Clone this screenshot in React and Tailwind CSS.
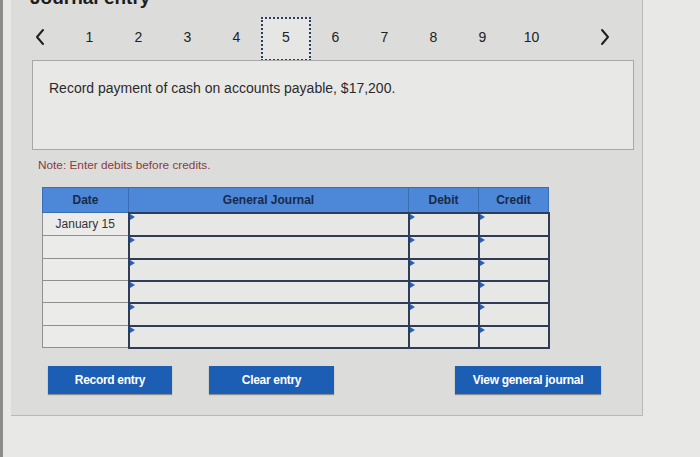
import React from 'react';

const pages = [1, 2, 3, 4, 5, 6, 7, 8, 9, 10];
const rows = [
  { date: 'January 15', h: 'h-[23px]' },
  { date: '', h: 'h-[23px]' },
  { date: '', h: 'h-[22px]' },
  { date: '', h: 'h-[22px]' },
  { date: '', h: 'h-[23px]' },
  { date: '', h: 'h-[22px]' },
];

const Chevron = ({ dir }) => (
  <svg width="10" height="18" viewBox="0 0 10 18" fill="none">
    <path
      d={dir === 'left' ? 'M8 2 L2 9 L8 16' : 'M2 2 L8 9 L2 16'}
      stroke="#1f1f1f"
      strokeWidth="2"
      strokeLinecap="round"
      strokeLinejoin="round"
    />
  </svg>
);

const InputCell = ({ width }) => (
  <td className={`${width} relative border-2 border-[#2f3c58] bg-[#e7e7e6] p-0`}>
    <span className="absolute left-0 top-0 w-0 h-0 border-t-[3px] border-b-[3px] border-l-[5px] border-t-transparent border-b-transparent border-l-[#2b5fb3]" />
  </td>
);

const Button = ({ children, className }) => (
  <button
    className={`h-[28px] bg-[#1d5eb5] text-white text-[12px] font-bold tracking-[-0.3px] shadow-[0_1px_1px_rgba(0,0,0,0.35)] ${className}`}
  >
    {children}
  </button>
);

export default function App() {
  return (
    <div className="w-[700px] h-[457px] overflow-hidden bg-[#e8e8e6] border-l-[3px] border-[#8c8c8c] font-['Liberation_Sans',Arial,sans-serif]">
      <div className="ml-[8px] w-[632px] h-[416px] bg-[#dcdcdb] border-r border-b border-[#b9b9b9] flex flex-col">
        {/* title, scrolled mostly out of view */}
        <div className="h-[9px] overflow-hidden pl-[19px]">
          <div className="-mt-[13px] text-[19px] leading-[22px] font-bold text-[#1c1c1c]">Journal entry</div>
        </div>

        {/* pagination */}
        <div className="mt-[8px] flex items-center pl-[14px]">
          <div className="w-[30px] h-[44px] pb-[4px] flex items-center justify-center">
            <Chevron dir="left" />
          </div>
          <div className="ml-[10px] flex">
            {pages.map((p) => (
              <div
                key={p}
                className={
                  p === 5
                    ? 'w-[50px] h-[44px] pb-[3px] flex items-center justify-center border-2 border-dotted border-[#2c3a66] bg-[#e6e6e5] text-[14px] text-[#222]'
                    : 'w-[49px] h-[44px] pb-[4px] flex items-center justify-center text-[14px] text-[#222]'
                }
              >
                {p}
              </div>
            ))}
          </div>
          <div className="ml-[34px] w-[30px] h-[44px] pb-[4px] flex items-center justify-center">
            <Chevron dir="right" />
          </div>
        </div>

        {/* question */}
        <div className="-mt-[1px] ml-[21px] w-[602px] h-[90px] border border-[#a8a8a8] bg-[#e8e8e7] pl-[16px] pt-[18px]">
          <p className="text-[14px] leading-[18px] text-[#2b2b2b]">
            Record payment of cash on accounts payable, $17,200.
          </p>
        </div>

        <p className="mt-[8px] ml-[27px] text-[11.8px] leading-[14px] text-[#8a3b3b]">
          Note: Enter debits before credits.
        </p>

        {/* journal table */}
        <table className="mt-[15px] ml-[31px] border-collapse table-fixed w-[506px]">
          <thead>
            <tr className="h-[25px] bg-[#4c88d7] text-[12px] font-bold text-[#1a2949]">
              <th className="w-[86px] border border-[#3a6db3] font-bold">Date</th>
              <th className="w-[280px] border border-[#3a6db3] font-bold">General Journal</th>
              <th className="w-[70px] border border-[#3a6db3] font-bold">Debit</th>
              <th className="w-[70px] border border-[#3a6db3] font-bold">Credit</th>
            </tr>
          </thead>
          <tbody>
            {rows.map((r, i) => (
              <tr key={i} className={r.h}>
                <td className="w-[86px] border border-[#8f8f8f] bg-[#ebebea] text-center text-[12px] text-[#333]">
                  {r.date}
                </td>
                <InputCell width="w-[280px]" />
                <InputCell width="w-[70px]" />
                <InputCell width="w-[70px]" />
              </tr>
            ))}
          </tbody>
        </table>

        {/* actions */}
        <div className="mt-[17px] ml-[37px] flex">
          <Button className="w-[124px]">Record entry</Button>
          <Button className="ml-[37px] w-[125px]">Clear entry</Button>
          <Button className="ml-[121px] w-[146px]">View general journal</Button>
        </div>
      </div>
    </div>
  );
}
